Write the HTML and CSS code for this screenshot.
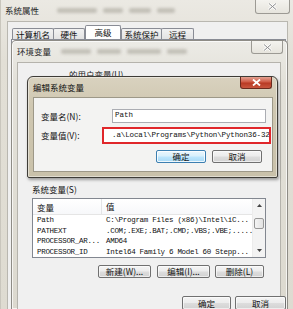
FILE: index.html
```html
<!DOCTYPE html>
<html>
<head>
<meta charset="utf-8">
<title>编辑系统变量</title>
<link rel="stylesheet" href="styles.css">
</head>
<body>
<div class="win win-sys">
  <div class="titlebar">
    <span class="title">系统属性</span>
    <span class="ghosts"><span class="ghost w40"></span><span class="ghost w20"></span><span class="ghost w22"></span><span class="ghost w18"></span></span>
    <span class="close"><svg width="9" height="7" viewBox="0 0 9 7"><path d="M1 0.5 L8 6.5 M8 0.5 L1 6.5" stroke="#fff" stroke-width="2.4"/><path d="M1 0.5 L8 6.5 M8 0.5 L1 6.5" stroke="#8a8a8a" stroke-width="1"/></svg></span>
  </div>
  <div class="client sys-client">
    <div class="tabs">
      <span class="tab t1">计算机名</span>
      <span class="tab t2">硬件</span>
      <span class="tab t3 active">高级</span>
      <span class="tab t4">系统保护</span>
      <span class="tab t5">远程</span>
    </div>
    <div class="tabpanel"></div>
  </div>
</div>

<div class="win win-env">
  <div class="titlebar">
    <span class="title">环境变量</span>
    <span class="ghosts"><span class="ghost w30"></span><span class="ghost w24"></span><span class="ghost w34"></span><span class="ghost w20"></span></span>
    <span class="close"><svg width="9" height="7" viewBox="0 0 9 7"><path d="M1 0.5 L8 6.5 M8 0.5 L1 6.5" stroke="#fff" stroke-width="2.4"/><path d="M1 0.5 L8 6.5 M8 0.5 L1 6.5" stroke="#8a8a8a" stroke-width="1"/></svg></span>
  </div>
  <div class="client env-client">
    <div class="user-label">的用户变量(U)</div>
    <div class="sys-label">系统变量(S)</div>
    <div class="listbox">
      <div class="lv">
        <div class="lv-head"><span class="c1">变量</span><span class="c2">值</span></div>
        <div class="lv-row"><span class="c1 mono">Path</span><span class="c2 mono">C:\Program Files (x86)\Intel\iC...</span></div>
        <div class="lv-row"><span class="c1 mono">PATHEXT</span><span class="c2 mono">.COM;.EXE;.BAT;.CMD;.VBS;.VBE;.....</span></div>
        <div class="lv-row"><span class="c1 mono">PROCESSOR_AR...</span><span class="c2 mono">AMD64</span></div>
        <div class="lv-row"><span class="c1 mono">PROCESSOR_ID</span><span class="c2 mono">Intel64 Family 6 Model 60 Stepp...</span></div>
      </div>
      <div class="vscroll">
        <span class="arrow"><svg width="5" height="3" viewBox="0 0 5 3"><path d="M0 3 L2.5 0 L5 3Z" fill="#444"/></svg></span>
        <span class="track"><span class="thumb"></span></span>
        <span class="arrow"><svg width="5" height="3" viewBox="0 0 5 3"><path d="M0 0 L2.5 3 L5 0Z" fill="#444"/></svg></span>
      </div>
    </div>
    <div class="btn-row">
      <span class="btn b-new">新建(W)...</span>
      <span class="btn b-edit">编辑(I)...</span>
      <span class="btn b-del">删除(L)</span>
    </div>
    <div class="btn-row bottom-row">
      <span class="btn b-ok">确定</span>
      <span class="btn b-cancel">取消</span>
    </div>
  </div>
</div>

<div class="win win-edit">
  <div class="titlebar">
    <span class="title">编辑系统变量</span>
    <span class="close red"><svg width="9" height="7" viewBox="0 0 9 7"><path d="M1 0.5 L8 6.5 M8 0.5 L1 6.5" stroke="#fff" stroke-width="1.8"/></svg></span>
  </div>
  <div class="client edit-client">
    <div class="form">
      <span class="lbl">变量名(N):</span>
      <span class="field name-field mono">Path</span>
      <span class="lbl">变量值(V):</span>
      <span class="field value-field mono">.a\Local\Programs\Python\Python36-32</span>
    </div>
    <div class="btn-row edit-btns">
      <span class="btn default">确定</span>
      <span class="btn">取消</span>
    </div>
  </div>
</div>
</body>
</html>
```

FILE: styles.css
```css
* { box-sizing: border-box; margin: 0; padding: 0; }
html, body { width: 293px; height: 309px; overflow: hidden; }
body {
  position: relative;
  background: #e4e1d8;
  font-family: "Noto Sans CJK SC", "Noto Sans", sans-serif;
  font-size: 8.5px;
  line-height: 1;
  color: #111;
}
.mono { font-family: "Liberation Mono", "Noto Sans CJK SC", monospace; font-size: 7.5px; }

/* generic window */
.win { position: absolute; display: flex; flex-direction: column; overflow: hidden; }
.titlebar { display: flex; align-items: center; flex: none; }
.title { white-space: nowrap; color: #1e1e1e; }
.ghosts { display: flex; gap: 6px; margin-left: 14px; }
.ghost { height: 5px; background: #b9b6ad; filter: blur(1.6px); opacity: .8; border-radius: 2px; }
.w18 { width: 18px; } .w20 { width: 20px; } .w22 { width: 22px; } .w24 { width: 24px; }
.w30 { width: 30px; } .w34 { width: 34px; } .w40 { width: 40px; }
.close {
  margin-left: auto; align-self: flex-start;
  display: flex; align-items: center; justify-content: center;
  border: 1px solid #9c9a94; border-top: none;
  border-radius: 0 0 3px 3px;
  background: linear-gradient(#f4f3ef, #e6e4dd);
}
.client { background: #f0f0f0; }

/* 系统属性 */
.win-sys {
  left: 0; top: 0; width: 293px; height: 309px;
  background: linear-gradient(#ebe9e3, #e2dfd6 60px, #dedbd1);
  border-left: 1px solid #c9c6bd;
}
.win-sys .titlebar { height: 21px; padding-left: 4px; }
.win-sys .ghosts { margin-left: 18px; }
.win-sys .close { width: 35px; height: 14px; margin-right: 3px; }
.sys-client {
  flex: 1; margin-left: 6px; margin-right: 5px;
  border: 1px solid #b9b7b0; border-bottom: none;
  padding: 3px 0 0 3px;
  display: flex; flex-direction: column;
}
.tabs { display: flex; align-items: flex-end; height: 14px; padding-left: 1px; flex: none; }
.tab {
  height: 11px; display: flex; align-items: center; justify-content: center;
  border: 1px solid #898c95; border-bottom: none;
  background: linear-gradient(#f2f2f2, #e3e3e3);
  margin-right: -1px; border-radius: 2px 2px 0 0;
}
.tab.t1 { width: 42px; }
.tab.t2 { width: 32px; }
.tab.t3 { width: 36px; }
.tab.t4 { width: 41px; }
.tab.t5 { width: 33px; }
.tab.active {
  height: 14px; background: #fff; position: relative; z-index: 1;
  margin-left: 1px; margin-right: 0;
}
.tabpanel { flex: 1; background: #fff; border: 1px solid #898c95; border-bottom: none; margin-right: 1px; }

/* 环境变量 */
.win-env {
  left: 11px; top: 40px; width: 277px; height: 269px;
  background: linear-gradient(#ecebe6, #e3e1d9 40px, #dcd9cf);
  border: 1px solid #8e8c86; border-bottom: none;
  border-radius: 5px 5px 0 0;
  box-shadow: inset 0 0 0 1px rgba(255,255,255,.7);
}
.win-env .titlebar { height: 21px; padding-left: 5px; }
.win-env .ghosts { margin-left: 10px; }
.win-env .close { width: 32px; height: 13px; margin-right: 4px; }
.env-client {
  flex: 1; margin: 0 6px 0 5px;
  border: 1px solid #b5b3ac; border-bottom: none;
  display: flex; flex-direction: column;
  padding-left: 14px;
}
.user-label { margin: 7px 0 0 37px; height: 9px; line-height: 9px; color: #222; }
.sys-label { margin-top: 105px; height: 10px; line-height: 10px; }
.listbox {
  margin-top: 4px; width: 234px; height: 60px; flex: none;
  border: 1px solid #828790; background: #fff;
  display: flex;
}
.lv { flex: 1; display: flex; flex-direction: column; overflow: hidden; }
.lv-head {
  height: 16px; display: flex; align-items: center; flex: none;
  border-bottom: 1px solid #e5e5e5;
  background: linear-gradient(#fff, #f7f8fa);
}
.lv-head .c1 { border-right: 1px solid #e3e4e6; height: 16px; line-height: 16px; }
.lv-row { height: 10.5px; line-height: 10.5px; display: flex; flex: none; white-space: nowrap; }
.lv-row .mono { letter-spacing: -0.3px; }
.c1 { width: 69px; padding-left: 4px; flex: none; overflow: hidden; }
.c2 { padding-left: 4px; white-space: nowrap; }
.vscroll {
  width: 13px; flex: none; display: flex; flex-direction: column;
  background: #f3f3f3; border-left: 1px solid #ececec;
}
.arrow { height: 13px; display: flex; align-items: center; justify-content: center; flex: none; }
.track { flex: 1; padding-top: 6px; }
.thumb {
  display: block; height: 11px; margin: 0 1px;
  border: 1px solid #979797; border-radius: 2px;
  background: linear-gradient(90deg, #f4f4f4, #e2e2e2);
}
.btn-row { display: flex; gap: 5px; flex: none; }
.btn {
  display: flex; align-items: center; justify-content: center;
  border: 1px solid #707070; border-radius: 2px;
  background: linear-gradient(#f4f4f4 0%, #ececec 48%, #dddddd 52%, #d2d2d2 100%);
  box-shadow: inset 0 0 0 1px rgba(255,255,255,.6);
  white-space: nowrap;
}
.env-client > .btn-row:not(.bottom-row) { margin-top: 7px; width: 234px; justify-content: flex-end; padding-right: 2px; }
.b-new { width: 53px; height: 13px; margin-right: 1px; }
.b-edit { width: 53px; height: 13px; }
.b-del { width: 49px; height: 13px; }
.bottom-row { margin-top: 18px; width: 254px; justify-content: flex-end; gap: 4px; }
.b-ok, .b-cancel { width: 49px; height: 14px; }
.b-cancel { width: 51px; }

/* 编辑系统变量 */
.win-edit {
  left: 27px; top: 76px; width: 251px; height: 102px;
  background: linear-gradient(#d9d2bf, #cfc7b1 30px, #c9c1aa);
  border: 1px solid #3e3c37;
  border-radius: 6px 6px 2px 2px;
  box-shadow: inset 0 0 0 1px rgba(255,255,255,.45), 1px 2px 3px rgba(0,0,0,.35);
  overflow: visible;
}
.win-edit .titlebar { height: 20px; padding-left: 5px; }
.win-edit .title { color: #111; }
.close.red {
  width: 32px; height: 12px; margin-right: 5px;
  border: 1px solid #6a2a1e; border-top: none;
  background: linear-gradient(#e3a293, #cf5a45 45%, #b83a24 55%, #c9563f);
}
.edit-client {
  flex: 1; margin: 0 4px 5px 5px;
  border: 1px solid #9d9888;
  background: #f3f3f2;
  display: flex; flex-direction: column;
}
.form {
  display: grid;
  grid-template-columns: 68px 1fr;
  grid-template-rows: 14px 17px;
  row-gap: 4px;
  margin-top: 11px;
  align-items: center;
}
.lbl { padding-left: 7px; white-space: nowrap; }
.field {
  background: #fff; height: 100%;
  display: flex; align-items: center; white-space: nowrap; overflow: hidden;
}
.name-field { margin-left: 10px; width: 154px; border: 1px solid #abadb3; padding-left: 2px; }
.value-field { width: 169px; border: 2px solid #e0272b; padding-left: 8px; letter-spacing: -0.12px; }
.edit-btns { margin-top: 6px; padding-left: 122px; gap: 6px; }
.edit-btns .btn { width: 50px; height: 13px; }
.btn.default {
  border-color: #3c7fb1;
  background: linear-gradient(#eaf6fd 0%, #d9f0fc 48%, #bee6fd 52%, #a7d9f5 100%);
  box-shadow: inset 0 0 0 1px rgba(255,255,255,.8);
}
```
